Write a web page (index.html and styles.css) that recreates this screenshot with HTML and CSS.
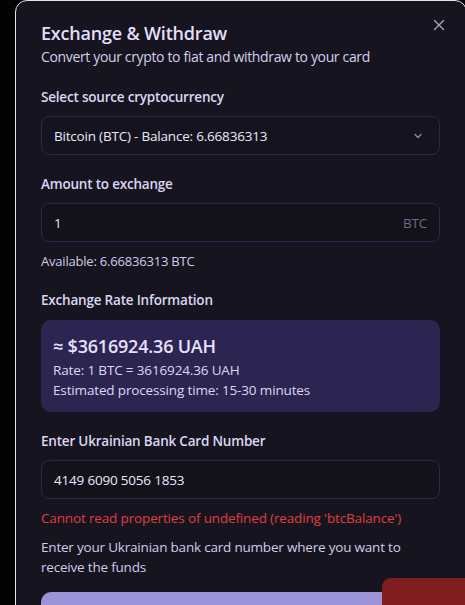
FILE: index.html
```html
<!DOCTYPE html>
<html lang="en">
<head>
<meta charset="utf-8">
<title>Exchange &amp; Withdraw</title>
<link rel="stylesheet" href="styles.css">
</head>
<body>
<div class="backdrop">
  <div class="modal">
    <button class="close" aria-label="Close">
      <svg width="12" height="12" viewBox="0 0 12 12"><path d="M1.5 1.5 L10.5 10.5 M10.5 1.5 L1.5 10.5" stroke="currentColor" stroke-width="1.4" stroke-linecap="round"/></svg>
    </button>
    <h2 class="title">Exchange &amp; Withdraw</h2>
    <p class="subtitle">Convert your crypto to fiat and withdraw to your card</p>

    <div class="field first">
      <label class="label">Select source cryptocurrency</label>
      <div class="box select">
        <span>Bitcoin (BTC) - Balance: 6.66836313</span>
        <svg class="chev" width="12" height="12" viewBox="0 0 12 12"><path d="M3 4.5 L6 7.5 L9 4.5" fill="none" stroke="currentColor" stroke-width="1.3" stroke-linecap="round" stroke-linejoin="round"/></svg>
      </div>
    </div>

    <div class="field">
      <label class="label">Amount to exchange</label>
      <div class="box">
        <span>1</span>
        <span class="unit">BTC</span>
      </div>
      <p class="hint">Available: 6.66836313 BTC</p>
    </div>

    <div class="field">
      <label class="label">Exchange Rate Information</label>
      <div class="rate">
        <div class="rate-total">≈ $3616924.36 UAH</div>
        <div class="rate-line">Rate: 1 BTC = 3616924.36 UAH</div>
        <div class="rate-line">Estimated processing time: 15-30 minutes</div>
      </div>
    </div>

    <div class="field">
      <label class="label">Enter Ukrainian Bank Card Number</label>
      <div class="box">
        <span>4149 6090 5056 1853</span>
      </div>
      <p class="error">Cannot read properties of undefined (reading 'btcBalance')</p>
      <p class="help">Enter your Ukrainian bank card number where you want to receive the funds</p>
    </div>

    <div class="submit"></div>
  </div>
  <div class="toast"></div>
</div>
</body>
</html>
```
FILE: styles.css
```css
* { box-sizing: border-box; }
html, body { margin: 0; padding: 0; }
body {
  background: #030304;
  font-family: "Open Sans", "Noto Sans", sans-serif;
  overflow: hidden;
  width: 465px;
  height: 605px;
}
.backdrop {
  position: relative;
  width: 465px;
  height: 605px;
  padding-left: 15px;
  overflow: hidden;
}
.modal {
  position: relative;
  width: 452px;
  height: 640px;
  background: #16151f;
  border: 1px solid #e4e2ea;
  border-radius: 12px;
  padding: 18px 26px 0 25px;
}
.close {
  position: absolute;
  top: 18px;
  right: 21px;
  width: 12px;
  height: 12px;
  padding: 0;
  border: 0;
  background: none;
  color: #a6a2c4;
  display: flex;
}
.title {
  margin: 0;
  font-size: 18px;
  line-height: 28px;
  font-weight: 600;
  color: #e4defb;
  letter-spacing: -0.2px;
}
.subtitle {
  margin: 0;
  font-size: 14px;
  line-height: 20px;
  color: #d4cfec;
  letter-spacing: -0.35px;
}
.field { margin-top: 19px; display: flex; flex-direction: column; }
.field.first { margin-top: 20px; }
.label {
  font-size: 13.5px;
  line-height: 20px;
  font-weight: 600;
  color: #dcd6f4;
  margin-bottom: 9px;
  letter-spacing: -0.2px;
}
.box {
  height: 39px;
  border: 1px solid #2c2650;
  border-radius: 8px;
  background: #13121b;
  padding: 0 12px;
  display: flex;
  align-items: center;
  justify-content: space-between;
  font-size: 13.5px;
  color: #ebe7fb;
  letter-spacing: -0.2px;
}
.select { background: #15141e; }
.chev { color: #8e8aa6; margin-right: 3px; }
.unit { color: #6e6a84; }
.hint {
  margin: 9px 0 0;
  font-size: 13px;
  line-height: 20px;
  color: #d0cbe8;
  letter-spacing: -0.2px;
}
.rate {
  margin-top: 1px;
  background: #2d2551;
  border-radius: 10px;
  padding: 12px 12px;
}
.rate-total {
  font-size: 18px;
  line-height: 28px;
  font-weight: 600;
  color: #e6e0fb;
  letter-spacing: -0.2px;
}
.rate-line {
  font-size: 13.5px;
  line-height: 20px;
  color: #dcd6f4;
  letter-spacing: -0.15px;
}
.error {
  margin: 9px 0 0;
  font-size: 13.5px;
  line-height: 20px;
  color: #e03c40;
  letter-spacing: -0.15px;
}
.help {
  margin: 9px 0 0;
  font-size: 13.5px;
  line-height: 20px;
  color: #d0cbe8;
  letter-spacing: -0.2px;
}
.submit {
  margin-top: 15px;
  height: 44px;
  border-radius: 10px;
  background: #9d93d8;
}
.toast {
  position: absolute;
  left: 382px;
  top: 578px;
  width: 120px;
  height: 60px;
  background: #7f1d1f;
  border-radius: 9px;
}
```
